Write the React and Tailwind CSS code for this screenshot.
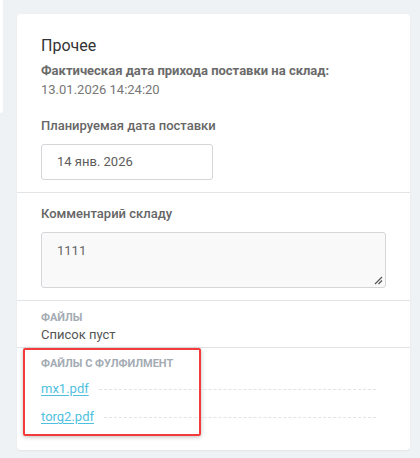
import React from 'react';

const files = [
    { id: 'mx1', name: 'mx1.pdf' },
    { id: 'torg2', name: 'torg2.pdf' },
];

// Section heading in small caps style
const Caption = ({ children }) => (
    <div className="text-[11px] leading-[16px] font-bold uppercase text-[#a3abb3]">{children}</div>
);

const App = () => {
    return (
        <main className="w-[420px] h-[458px] bg-[#eef2f5] flex items-start font-['Roboto',sans-serif] overflow-hidden">
            {/* edge of neighbouring panel */}
            <div className="w-[3px] h-[113px] bg-white rounded-br-[3px] shrink-0" />

            <section className="ml-[14px] mt-[14px] w-[393px] bg-white rounded-[4px] shadow-[0_1px_2px_rgba(0,0,0,0.05)]">
                <div className="px-[24px] pt-[22px] pb-[12px]">
                    <h2 className="text-[16px] leading-[20px] text-[#333]">Прочее</h2>
                    <div className="mt-[6px] text-[13px] leading-[18px] font-bold text-[#6b6b6b]">
                        Фактическая дата прихода поставки на склад:
                    </div>
                    <div className="mt-[1px] text-[13px] leading-[18px] text-[#777]">13.01.2026 14:24:20</div>

                    <label className="block mt-[18px] text-[13px] leading-[18px] font-medium text-[#666]">
                        Планируемая дата поставки
                    </label>
                    <div className="mt-[9px] w-[172px] h-[36px] border border-[#d4d6d9] rounded-[3px] flex items-center px-[15px] text-[13px] text-[#5c5c5c]">
                        14 янв. 2026
                    </div>
                </div>

                <div className="border-t border-[#e2e5e8] px-[24px] pt-[12px] pb-[12px]">
                    <label className="block text-[13px] leading-[18px] font-medium text-[#666]">Комментарий складу</label>
                    <div className="relative mt-[9px] h-[56px] bg-[#f9f9f9] border border-[#d4d6d9] rounded-[3px] px-[15px] pt-[9px] text-[13px] leading-[18px] text-[#666]">
                        1111
                        <svg className="absolute right-[2px] bottom-[2px]" width="9" height="9" viewBox="0 0 9 9">
                            <path d="M8 1L1 8M8 4.5L4.5 8" stroke="#555" strokeWidth="1.2" />
                        </svg>
                    </div>
                </div>

                <div className="border-t border-[#e2e5e8] px-[24px] pt-[9px] pb-[3px]">
                    <Caption>Файлы</Caption>
                    <div className="text-[13px] leading-[18px] text-[#555]">Список пуст</div>
                </div>

                <div className="relative border-t border-[#e2e5e8] px-[24px] pt-[8px] pb-[24px]">
                    <Caption>Файлы с фулфилмент</Caption>
                    <div className="flex flex-col gap-[10px] mt-[8px]">
                        {files.map((f) => (
                            <div key={f.id} className="flex items-center gap-[10px] pr-[10px]">
                                <a href="#" className="text-[13px] leading-[18px] text-[#4fc1df] underline underline-offset-2">
                                    {f.name}
                                </a>
                                <div className="flex-1 border-t border-dashed border-[#e3e3e3]" />
                            </div>
                        ))}
                    </div>
                    {/* highlight frame */}
                    <div className="absolute left-[6px] top-0 w-[178px] h-[88px] border-2 border-[#f43b3b] rounded-[2px] shadow-[0_1px_4px_rgba(0,0,0,0.25)]" />
                </div>
            </section>
        </main>
    );
};

export default App;
